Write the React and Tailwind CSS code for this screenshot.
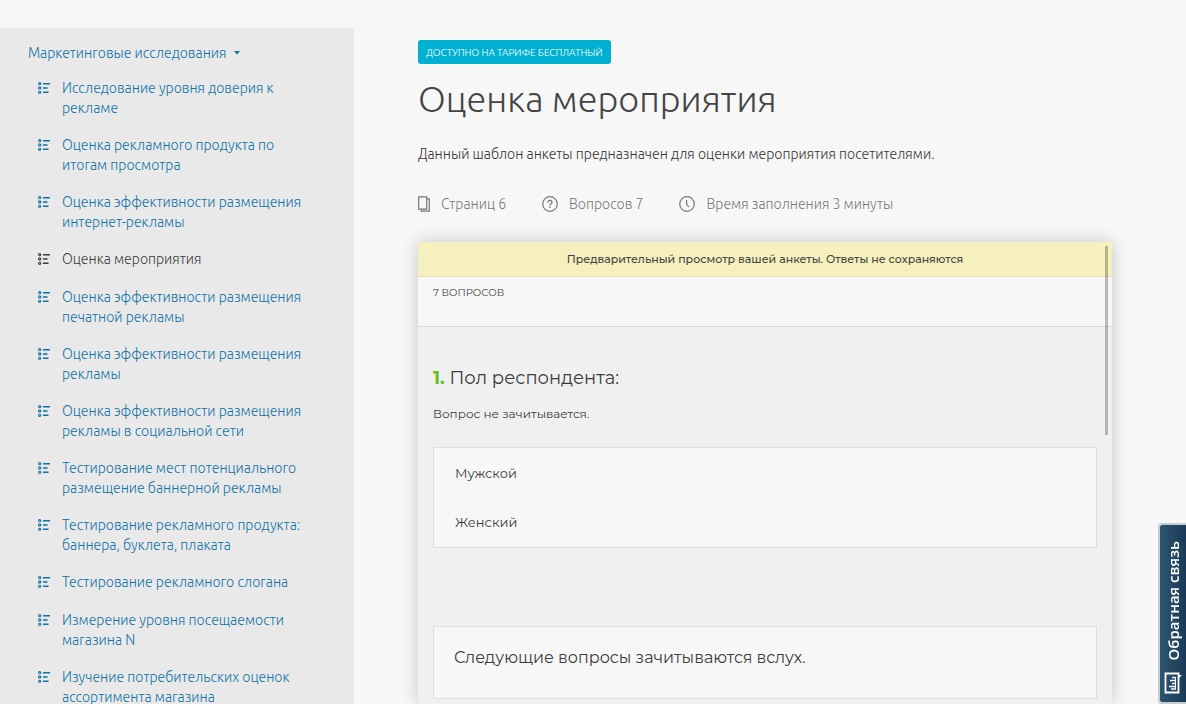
import { useState } from "react";
import clsx from "clsx";

const templates = [
  { id: 1, name: "Исследование уровня доверия к рекламе" },
  { id: 2, name: "Оценка рекламного продукта по итогам просмотра" },
  { id: 3, name: "Оценка эффективности размещения интернет-рекламы" },
  { id: 4, name: "Оценка мероприятия" },
  { id: 5, name: "Оценка эффективности размещения печатной рекламы" },
  { id: 6, name: "Оценка эффективности размещения рекламы" },
  { id: 7, name: "Оценка эффективности размещения рекламы в социальной сети" },
  { id: 8, name: "Тестирование мест потенциального размещение баннерной рекламы" },
  { id: 9, name: "Тестирование рекламного продукта: баннера, буклета, плаката" },
  { id: 10, name: "Тестирование рекламного слогана" },
  { id: 11, name: "Измерение уровня посещаемости магазина N" },
  { id: 12, name: "Изучение потребительских оценок ассортимента магазина" },
];

const ListIcon = () => (
  <svg width="12" height="12" viewBox="0 0 12 12" fill="currentColor" className="mt-1 shrink-0">
    <circle cx="1.7" cy="1.7" r="1.1" fill="none" stroke="currentColor" strokeWidth="1.1" />
    <circle cx="1.7" cy="6" r="1.1" fill="none" stroke="currentColor" strokeWidth="1.1" />
    <circle cx="1.7" cy="10.3" r="1.1" fill="none" stroke="currentColor" strokeWidth="1.1" />
    <path d="M5 1h7v1.5H5zM5 5.3h4.5v1.5H5zM5 9.6h5.5v1.5H5z" />
  </svg>
);

const PagesIcon = () => (
  <svg width="12" height="16" viewBox="0 0 12 16" fill="none" stroke="currentColor" strokeWidth="1.2">
    <path d="M.7.8h8v12.4h-8z" />
    <path d="M8.700 2.800h2.600v12.400H3.200v-2" />
  </svg>
);

const QuestionIcon = () => (
  <svg width="16" height="16" viewBox="0 0 16 16" fill="none" stroke="currentColor" strokeWidth="1.2">
    <circle cx="8" cy="8" r="7.3" />
    <path d="M6 6.4c0-1.3.9-2 2-2s2 .7 2 1.9c0 1.5-2 1.6-2 3.2M8 10.6v1.3" strokeWidth="1.3" />
  </svg>
);

const ClockIcon = () => (
  <svg width="16" height="16" viewBox="0 0 16 16" fill="none" stroke="currentColor" strokeWidth="1.2">
    <circle cx="8" cy="8" r="7.3" />
    <path d="M7.6 4v4.3l2.2 2.6" />
  </svg>
);

const FeedbackIcon = () => (
  <svg width="18" height="22" viewBox="0 0 18 22" fill="none" stroke="currentColor">
    <path d="M1.5 1.5h13v19h-13z" strokeWidth="1.8" />
    <path d="M14 3h4l-4 4z" fill="currentColor" stroke="none" />
    <path d="M8 5.500h3.500M6 8.500h5.500M8 11.500h3.500M5 14.500h6.500M7 17h4.500" strokeWidth="1.600" />
    <path d="M11.500 5v12.500" strokeWidth="1" />
  </svg>
);

const Sidebar = ({ activeId, onSelect }) => (
  <aside className="w-[354px] shrink-0 mt-7 pt-[15px] pl-7 pr-12 bg-[#e9e9e9] text-[14px] leading-5 font-light text-[#0f72a6]">
    <button className="flex items-center gap-2 cursor-pointer">
      Маркетинговые исследования
      <svg width="6" height="4" viewBox="0 0 6 4" fill="currentColor"><path d="M0 0h6L3 3.5z" /></svg>
    </button>
    <ul className="mt-[15px] pl-2.5 flex flex-col gap-[17px]">
      {templates.map((template) => (
        <li key={template.id} className="min-h-[21px]">
          <a
            href={`#template-${template.id}`}
            className={clsx("flex gap-3", template.id === activeId && "text-[#3c3c3c]")}
            onClick={() => onSelect(template.id)}
          >
            <ListIcon />
            <span>{template.name}</span>
          </a>
        </li>
      ))}
    </ul>
  </aside>
);

const SurveyPreview = () => {
  const [answer, setAnswer] = useState(null);

  return (
    <section className="relative mt-7 grow font-['Montserrat','Open_Sans',sans-serif] font-normal text-[#3c3c3c] bg-[#f0f0f0] shadow-[0_0_16px_rgba(0,0,0,0.2)]">
      <div className="h-[35px] flex items-center justify-center bg-[#f5f0bd] border-b border-[#e6e0b4] text-[11px] font-medium text-[#444]">
        Предварительный просмотр вашей анкеты. Ответы не сохраняются
      </div>
      <div className="h-[50px] px-[15px] pt-2 bg-[#f7f7f7] border-b border-[#dcdcdc] text-[10px] leading-4">
        7 ВОПРОСОВ
      </div>
      <div className="px-[15px] pt-[39px]">
        <h2 className="text-[18px] leading-6">
          <b className="font-bold text-[#6abf1e]">1.</b> Пол респондента:
        </h2>
        <p className="mt-3.5 text-[12px] leading-5">Вопрос не зачитывается.</p>
        <div className="mt-[23px] h-[101px] px-[21px] pt-px bg-[#f7f7f7] border border-[#dedede] text-[13px]">
          {["Мужской", "Женский"].map((option) => (
            <label key={option} className="h-[49px] flex items-center cursor-pointer">
              <input
                type="radio"
                name="gender"
                className="sr-only"
                checked={answer === option}
                onChange={() => setAnswer(option)}
              />
              {option}
            </label>
          ))}
        </div>
        <div className="mt-[78px] h-[73px] px-5 pt-[19px] bg-[#f7f7f7] border border-[#dedede] text-[16px] leading-6">
          Следующие вопросы зачитываются вслух.
        </div>
      </div>
      <div className="absolute top-1 right-1 w-[3px] h-[189px] bg-black/25"></div>
    </section>
  );
};

const App = () => {
  const [activeId, setActiveId] = useState(4);

  return (
    <div className="h-screen flex overflow-hidden bg-[#f7f7f7] font-['Ubuntu','Noto_Sans',sans-serif] font-light">
      <Sidebar activeId={activeId} onSelect={setActiveId} />
      <main className="grow flex flex-col pt-10 pl-16 pr-[74px]">
        <div className="self-start h-6 px-2 flex items-center rounded-[3px] bg-[#00b0d0] text-[10px] text-white">
          ДОСТУПНО НА ТАРИФЕ БЕСПЛАТНЫЙ
        </div>
        <h1 className="mt-[11px] text-[36px] leading-[48px] font-light text-[#444]">Оценка мероприятия</h1>
        <p className="mt-[21px] text-[14px] leading-5 text-[#333]">
          Данный шаблон анкеты предназначен для оценки мероприятия посетителями.
        </p>
        <div className="mt-[30px] flex gap-9 text-[14px] leading-5 text-[#777]">
          <div className="flex items-center gap-[11px]"><PagesIcon />Страниц 6</div>
          <div className="flex items-center gap-[11px]"><QuestionIcon />Вопросов 7</div>
          <div className="flex items-center gap-[11px]"><ClockIcon />Время заполнения 3 минуты</div>
        </div>
        <SurveyPreview />
      </main>
      <button className="fixed right-0 bottom-0 w-7 h-[181px] pb-2 flex flex-col items-center justify-end gap-3 rounded-l-[4px] border-2 border-r-0 border-[#c3cdd3] bg-linear-to-r from-[#2c5670] to-[#1b3a58] text-white cursor-pointer">
        <span className="rotate-180 [writing-mode:vertical-rl] font-['Open_Sans',sans-serif] text-[15px] leading-5 font-semibold whitespace-nowrap">Обратная связь</span>
        <FeedbackIcon />
      </button>
    </div>
  );
};

export default App;
